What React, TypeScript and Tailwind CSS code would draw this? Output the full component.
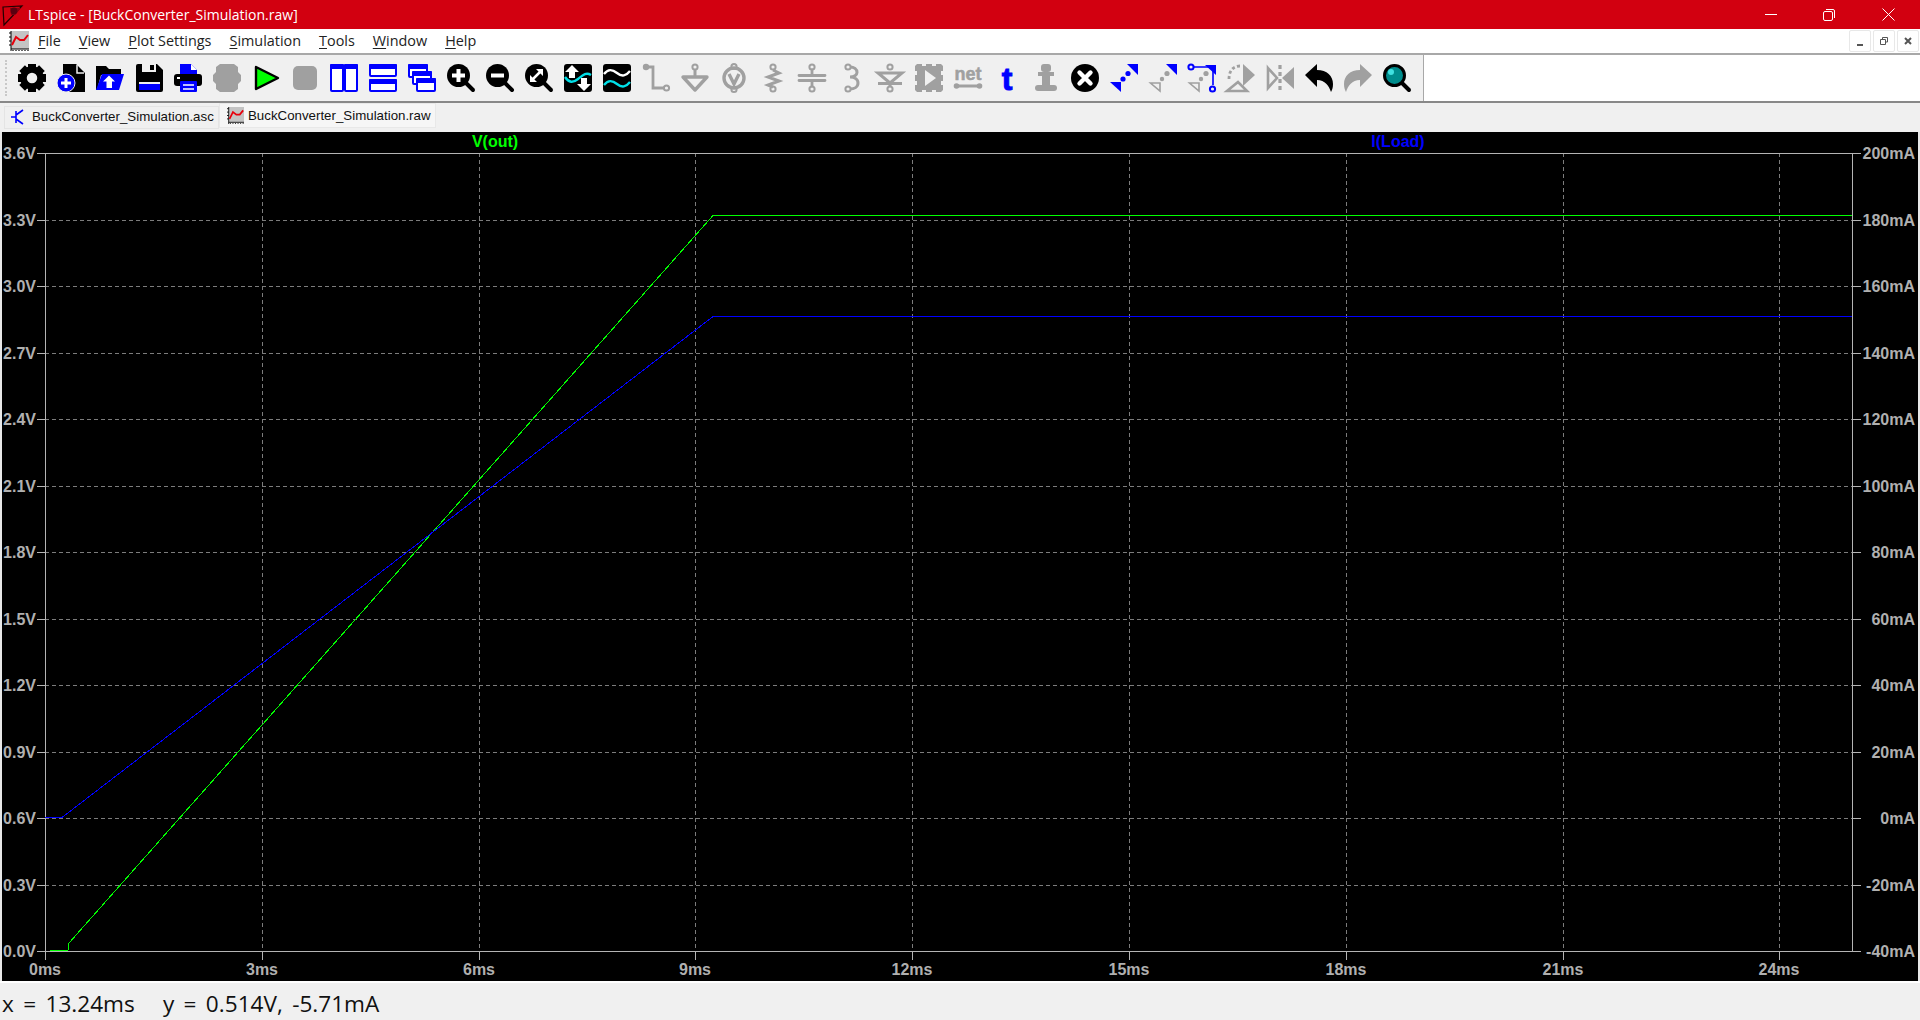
import React from "react";

const G = "#a0a0a0";
const B = "#0000ff";

function I({ children }: { children: React.ReactNode }) {
  return (
    <svg width="28" height="28" viewBox="0 0 28 28" className="shrink-0 overflow-visible">
      {children}
    </svg>
  );
}

function Lens({ children, fill = "#000" }: { children?: React.ReactNode; fill?: string }) {
  return (
    <I>
      <line x1="19" y1="19" x2="26" y2="26" stroke="#000" strokeWidth="4" strokeLinecap="round" />
      <circle cx="11.5" cy="11.5" r="11.5" fill={fill} />
      {children}
    </I>
  );
}

function Ring({ x, y, c = G }: { x: number; y: number; c?: string }) {
  return <circle cx={x} cy={y} r="2.6" fill="none" stroke={c} strokeWidth="2" />;
}

const Gear = () => (
  <I>
    {[0, 45, 90, 135, 180, 225, 270, 315].map((a) => (
      <rect key={a} x="10" y="0" width="8" height="7" fill="#000" transform={`rotate(${a} 14 14)`} />
    ))}
    <circle cx="14" cy="14" r="8.5" fill="none" stroke="#000" strokeWidth="6.5" />
  </I>
);

const NewDoc = () => (
  <I>
    <path d="M6 0H19L28 9V28H6Z" fill="#000" />
    <path d="M20 1V9H27" fill="none" stroke="#f0f0f0" strokeWidth="1.5" />
    <circle cx="9" cy="19" r="9" fill={B} stroke="#f0f0f0" strokeWidth="1" />
    <path d="M9 14V24M4 19H14" stroke="#fff" strokeWidth="3" />
  </I>
);

const Folder = () => (
  <I>
    <path d="M0 2H10L13 5H25V11H5L1 26H0Z" fill="#000" />
    <path d="M6 10H28L23 26H0Z" fill={B} />
    <path d="M13 11.5L19 17.5H16V24H10.5V17.5H7Z" fill="#fff" />
  </I>
);

const Save = () => (
  <I>
    <path d="M1 2Q1 0 3 0H22L28 6V26Q28 28 26 28H3Q1 28 1 26Z" fill="#000" />
    <rect x="7" y="0" width="14" height="8" fill="#f0f0f0" />
    <rect x="15" y="1" width="4" height="5" fill="#000" />
    <rect x="4" y="18" width="21" height="2" fill="#f0f0f0" />
    <rect x="4" y="20" width="21" height="6" fill={B} />
  </I>
);

const Print = () => (
  <I>
    <path d="M6 0H17L23 6V12H6Z" fill={B} />
    <path d="M17 0L23 6H17Z" fill="#fff" />
    <rect x="0" y="10" width="28" height="12" rx="3" fill="#000" />
    <rect x="3" y="13" width="3" height="2" fill="#fff" />
    <rect x="6" y="17" width="17" height="11" rx="1" fill={B} />
    <path d="M9 21H20M9 25H20" stroke="#fff" strokeWidth="1.5" />
  </I>
);

const Halt = () => (
  <I>
    <path d="M7 0H21L25 3V8L28 11V17L25 20V25L21 28H7L3 25V20L0 17V11L3 8V3Z" fill={G} />
  </I>
);

const Run = () => (
  <I>
    <path d="M4 3L26 14L4 25Z" fill="#00ff00" stroke="#000" strokeWidth="2.4" strokeLinejoin="round" />
  </I>
);

const Stop = () => (
  <I>
    <rect x="2" y="2" width="24" height="24" rx="5" fill={G} />
  </I>
);

const Pane = ({ x, y, w, h }: { x: number; y: number; w: number; h: number }) => (
  <g>
    <rect x={x + 1} y={y + 1} width={w - 2} height={h - 2} rx="1" fill="#fff" stroke={B} strokeWidth="2" />
    <rect x={x} y={y} width={w} height="5" rx="1" fill={B} />
  </g>
);

const TileV = () => (
  <I>
    <Pane x={0} y={0} w={14} h={28} />
    <Pane x={14} y={0} w={14} h={28} />
  </I>
);

const TileH = () => (
  <I>
    <Pane x={0} y={0} w={28} h={13} />
    <Pane x={0} y={15} w={28} h={13} />
  </I>
);

const Cascade = () => (
  <I>
    <Pane x={0} y={0} w={20} h={14} />
    <Pane x={4} y={7} w={20} h={14} />
    <Pane x={8} y={14} w={20} h={14} />
  </I>
);

const ZoomIn = () => (
  <Lens>
    <path d="M11.5 5V18M5 11.5H18" stroke="#fff" strokeWidth="4" />
  </Lens>
);
const ZoomOut = () => (
  <Lens>
    <path d="M5 11.5H18" stroke="#fff" strokeWidth="4" />
  </Lens>
);
const ZoomFit = () => (
  <Lens>
    <path d="M7 16L16 7" stroke="#fff" strokeWidth="2.5" />
    <path d="M11 5H18V12ZM5 11V18H12Z" fill="#fff" />
  </Lens>
);

const Wave1 = () => (
  <I>
    <rect width="28" height="28" rx="3" fill="#000" />
    <path d="M1 13C5 19 9 19 14 15S22 8 27 11" fill="none" stroke="#00e0e8" strokeWidth="2.4" />
    <path d="M8 1L15 8H11V14H5V8H1ZM20 27L13 20H17V14H23V20H27Z" fill="#fff" />
  </I>
);

const Wave2 = () => (
  <I>
    <rect width="28" height="28" rx="3" fill="#000" />
    <path d="M1 10C5 5 9 5 14 9S23 12 27 7" fill="none" stroke="#fff" strokeWidth="2.4" />
    <path d="M1 21C5 16 9 16 14 20S23 23 27 18" fill="none" stroke="#00e0e8" strokeWidth="2.4" />
  </I>
);

const Wire = () => (
  <I>
    <circle cx="4" cy="3" r="3.2" fill={G} />
    <path d="M4 3H11V24H22" fill="none" stroke={G} strokeWidth="2.8" />
    <Ring x={24.5} y={24} />
  </I>
);

const Gnd = () => (
  <I>
    <Ring x={14} y={3} />
    <path d="M14 6V12" stroke={G} strokeWidth="3" />
    <path d="M2 13H26L14 26Z" fill="none" stroke={G} strokeWidth="3.4" strokeLinejoin="round" />
  </I>
);

const Label = () => (
  <I>
    <circle cx="14" cy="14" r="10" fill="none" stroke={G} strokeWidth="3.4" />
    <path d="M9 10L14 20L19 10" fill="none" stroke={G} strokeWidth="3.4" />
    <Ring x={14} y={2.5} />
    <Ring x={14} y={25.5} />
  </I>
);

const Res = () => (
  <I>
    <Ring x={14} y={3} />
    <path d="M14 6L20 9L9 13L20 17L9 21L14 23" fill="none" stroke={G} strokeWidth="3" />
    <Ring x={14} y={25} />
  </I>
);

const Cap = () => (
  <I>
    <Ring x={14} y={3} />
    <path d="M14 6V11M14 17V22M1 11.5H27M1 16.5H27" stroke={G} strokeWidth="2.8" strokeLinecap="round" />
    <Ring x={14} y={25} />
  </I>
);

const Ind = () => (
  <I>
    <Ring x={11} y={3} />
    <path d="M13 3C17 3 20 5 20 8.5C20 11 17 13 13 13C17 13 21 15 21 19C21 23 17 25 13 25" fill="none" stroke={G} strokeWidth="3" />
    <Ring x={11} y={25} />
  </I>
);

const Diode = () => (
  <I>
    <Ring x={14} y={3} />
    <path d="M2 9H26L14 19ZM2 19.5H26M14 19V22" fill="none" stroke={G} strokeWidth="3" />
    <Ring x={14} y={25} />
  </I>
);

const Comp = () => (
  <I>
    <path
      d="M2 0H7V2H11V0H17V2H21V0H26L28 2V7H26V11H28V17H26V21H28V26L26 28H21V26H17V28H11V26H7V28H2L0 26V21H2V17H0V11H2V7H0V2Z"
      fill={G}
    />
    <path d="M10 6L21 14L10 22Z" fill="#f0f0f0" />
  </I>
);

const Net = () => (
  <I>
    <text x="14" y="16" textAnchor="middle" fontFamily="Liberation Sans" fontWeight="700" fontSize="18" fill={G} stroke={G} strokeWidth="0.5" textLength="27">
      net
    </text>
    <path d="M2 22H26" stroke={G} strokeWidth="3" />
    <circle cx="2.5" cy="22" r="2.8" fill={G} />
    <circle cx="25.5" cy="22" r="2.8" fill={G} />
  </I>
);

const T = () => (
  <I>
    <text x="14" y="26" textAnchor="middle" fontFamily="Liberation Sans" fontWeight="700" fontSize="32" fill={B} stroke={B} strokeWidth="1">
      t
    </text>
  </I>
);

const Spice = () => (
  <I>
    <rect x="9" y="0" width="10" height="8" rx="3" fill={G} />
    <rect x="6" y="8" width="16" height="4" fill={G} />
    <rect x="10" y="8" width="8" height="18" fill={G} />
    <rect x="3" y="21" width="22" height="6" rx="3" fill={G} />
  </I>
);

const Cross = () => (
  <I>
    <circle cx="14" cy="14" r="14" fill="#000" />
    <path d="M8.5 8.5L19.5 19.5M19.5 8.5L8.5 19.5" stroke="#fff" strokeWidth="4.4" strokeLinecap="round" />
  </I>
);

const Move = () => (
  <I>
    <path d="M17 0H28V11Z" fill={B} />
    <path d="M0 18H11V28Z" fill={B} />
    <circle cx="18" cy="9.5" r="2.6" fill={B} />
    <circle cx="13" cy="15" r="2.6" fill={B} />
  </I>
);

const Drag = () => (
  <I>
    <path d="M17 0H28V11Z" fill={B} />
    <path d="M1.5 19H11V27Z" fill="none" stroke={G} strokeWidth="1.6" />
    <circle cx="18" cy="9.5" r="2.6" fill={G} />
    <circle cx="13" cy="15" r="2.2" fill={G} />
  </I>
);

const DragWire = () => (
  <I>
    <path d="M17 1H28V11Z" fill={B} />
    <path d="M6 3H25V21" fill="none" stroke={B} strokeWidth="1.6" />
    <Ring x={3} y={3} c={B} />
    <Ring x={24.5} y={25} c={B} />
    <path d="M1.5 19H11V27Z" fill="none" stroke={G} strokeWidth="1.6" />
    <circle cx="18" cy="9.5" r="2.6" fill={G} />
    <circle cx="13" cy="15" r="2.2" fill={G} />
  </I>
);

const Rotate = () => (
  <I>
    <path d="M16 0L28 11L16 22Z" fill={G} />
    <path d="M0 27H20L11 18Z" fill="none" stroke={G} strokeWidth="2.6" />
    <path d="M13 2C6 2 2 7 2 15" fill="none" stroke={G} strokeWidth="2.8" strokeDasharray="3 2.4" />
  </I>
);

const Mirror = () => (
  <I>
    <path d="M2 4L11 14L2 24Z" fill="none" stroke={G} strokeWidth="2.6" />
    <path d="M28 3V25L16 14Z" fill={G} />
    <path d="M14 1V28" stroke={G} strokeWidth="3.2" strokeDasharray="4 3" />
  </I>
);

const undoD = "M0 11L12 0V6C22 6 28 12 28 20C28 24 27 26 26 28C24 22 20 16 12 16V23Z";
const Undo = () => (
  <I>
    <path d={undoD} fill="#000" />
  </I>
);
const Redo = () => (
  <I>
    <path d={undoD} fill={G} transform="matrix(-1 0 0 1 28 0)" />
  </I>
);

const Find = () => (
  <I>
    <line x1="19" y1="19" x2="26" y2="26" stroke="#000" strokeWidth="4" strokeLinecap="round" />
    <circle cx="11.5" cy="11.5" r="10" fill="#008c8c" stroke="#000" strokeWidth="3" />
    <circle cx="8" cy="8" r="3" fill="#40e0e0" />
  </I>
);

const tools = [
  Gear, NewDoc, Folder, Save, Print, Halt, Run, Stop, TileV, TileH, Cascade, ZoomIn, ZoomOut, ZoomFit,
  Wave1, Wave2, Wire, Gnd, Label, Res, Cap, Ind, Diode, Comp, Net, T, Spice, Cross, Move, Drag, DragWire,
  Rotate, Mirror, Undo, Redo, Find,
];

function ChartIcon({ size }: { size: number }) {
  return (
    <svg width={size} height={size} viewBox="0 0 20 20" className="shrink-0">
      <rect x="2" y="0" width="18" height="18" fill="#c4c4c4" />
      <path d="M2 0V20M0 2H2M0 6H2M0 10H2M0 14H2M2 18H20" stroke="#000" strokeWidth="1" />
      <path d="M4 19V20M7 19V20M10 19V20M13 19V20M16 19V20M19 19V20" stroke="#000" strokeWidth="1.2" />
      <path d="M3 14L7 6L11 9L15 9L19 4" fill="none" stroke="#e8000c" strokeWidth="2" />
    </svg>
  );
}

function Mn({ u, rest }: { u: string; rest: string }) {
  return (
    <span>
      <span className="underline underline-offset-2 decoration-1">{u}</span>
      {rest}
    </span>
  );
}

const ys = Array.from({ length: 13 }, (_, i) => 153 + i * 66.5);
const xs = Array.from({ length: 9 }, (_, i) => Math.round(45 + i * 216.8));
const vLabels = ["3.6V", "3.3V", "3.0V", "2.7V", "2.4V", "2.1V", "1.8V", "1.5V", "1.2V", "0.9V", "0.6V", "0.3V", "0.0V"];
const aLabels = ["200mA", "180mA", "160mA", "140mA", "120mA", "100mA", "80mA", "60mA", "40mA", "20mA", "0mA", "-20mA", "-40mA"];
const tLabels = ["0ms", "3ms", "6ms", "9ms", "12ms", "15ms", "18ms", "21ms", "24ms"];

function Plot() {
  const txt = { fontFamily: "Liberation Sans, Arial, sans-serif", fontWeight: 700, fontSize: 16, fill: "#b0b0b0" };
  return (
    <svg width="1916" height="849" viewBox="2 132 1916 849" className="block bg-black">
      <g shapeRendering="crispEdges" fill="none" strokeWidth="1">
        {ys.slice(1, 12).map((y) => (
          <line key={y} x1="45" x2="1852" y1={Math.round(y)} y2={Math.round(y)} stroke="#7c7c7c" strokeDasharray="4 3" />
        ))}
        {xs.slice(1).map((x) => (
          <line key={x} x1={x} x2={x} y1="153" y2="951" stroke="#7c7c7c" strokeDasharray="4 3" />
        ))}
        <rect x="45" y="153" width="1807" height="798" stroke="#b4b4b4" />
        {ys.map((y) => (
          <g key={y}>
            <line x1="37" x2="45" y1={Math.round(y)} y2={Math.round(y)} stroke="#b4b4b4" />
            <line x1="1852" x2="1861" y1={Math.round(y)} y2={Math.round(y)} stroke="#b4b4b4" />
          </g>
        ))}
        {xs.map((x) => (
          <line key={x} x1={x} x2={x} y1="951" y2="960" stroke="#b4b4b4" />
        ))}
        <polyline points="50,950.5 68,950.5 69,943 713,215.5 1852,215.5" stroke="#00ff00" strokeWidth="1" />
        <polyline points="45,817.5 62,817.5 713,316.5 1852,316.5" stroke="#0000ff" strokeWidth="1" />
      </g>
      {vLabels.map((t, i) => (
        <text key={t} x="36" y={ys[i] + 6} textAnchor="end" {...txt}>
          {t}
        </text>
      ))}
      {aLabels.map((t, i) => (
        <text key={t} x="1915" y={ys[i] + 6} textAnchor="end" {...txt}>
          {t}
        </text>
      ))}
      {tLabels.map((t, i) => (
        <text key={t} x={xs[i]} y="975" textAnchor="middle" {...txt}>
          {t}
        </text>
      ))}
      <text x="495" y="147" textAnchor="middle" {...txt} fill="#00ff00">
        V(out)
      </text>
      <text x="1398" y="147" textAnchor="middle" {...txt} fill="#0000ff">
        I(Load)
      </text>
    </svg>
  );
}

export default function App() {
  return (
    <div className="w-[1920px] h-[1020px] overflow-hidden flex flex-col bg-[#f0f0f0] font-['Open_Sans',sans-serif]">
      {/* title bar */}
      <div className="h-[29px] shrink-0 bg-[#d20010] flex items-center text-white">
        <svg width="24" height="26" viewBox="0 0 24 26" className="ml-[1px] shrink-0">
          <path d="M2 5L21 4L3 23Z" fill="none" stroke="#200" strokeWidth="1.2" />
          <path d="M9 6H20L14 13H10Z" fill="#8c0010" />
          <circle cx="13" cy="9" r="3.4" fill="#5a0010" />
        </svg>
        <span className="ml-[3px] pt-[1px] text-[14px] leading-none whitespace-pre">LTspice - [BuckConverter_Simulation.raw]</span>
        <div className="ml-auto flex items-center pr-[2px]">
          <div className="w-[58px] flex justify-center">
            <div className="w-[12px] h-[1px] bg-white" />
          </div>
          <div className="w-[58px] flex justify-center">
            <svg width="12" height="12" viewBox="0 0 12 12">
              <rect x="0.5" y="2.5" width="9" height="9" rx="1.5" fill="none" stroke="#fff" />
              <path d="M3 .5H10Q11.5 .5 11.5 2V9" fill="none" stroke="#fff" />
            </svg>
          </div>
          <div className="w-[60px] flex justify-center">
            <svg width="13" height="13" viewBox="0 0 13 13">
              <path d="M.5 .5L12.5 12.5M12.5 .5L.5 12.5" stroke="#fff" strokeWidth="1" />
            </svg>
          </div>
        </div>
      </div>

      {/* menu bar */}
      <div className="h-[26px] shrink-0 bg-white border-b-2 border-[#a8a8a8] flex items-center text-[14.4px] text-[#222] box-border">
        <div className="ml-[9px] mr-[9px]">
          <ChartIcon size={20} />
        </div>
        <div className="flex gap-[18px] leading-none pt-[1px]">
          <Mn u="F" rest="ile" />
          <Mn u="V" rest="iew" />
          <Mn u="P" rest="lot Settings" />
          <Mn u="S" rest="imulation" />
          <Mn u="T" rest="ools" />
          <Mn u="W" rest="indow" />
          <Mn u="H" rest="elp" />
        </div>
        <div className="ml-auto flex gap-[2px] pr-[1px]">
          {[
            <path key="a" d="M2 9H8" stroke="#555" strokeWidth="2" />,
            <path key="b" d="M1.5 3.5H6.5V8.5H1.5ZM3.5 3V1.5H8.5V6H7" fill="none" stroke="#555" strokeWidth="1" />,
            <path key="c" d="M2 2L8 8M8 2L2 8" stroke="#555" strokeWidth="2" />,
          ].map((p, i) => (
            <div key={i} className="w-[22px] h-[22px] border border-[#e8e8e8] rounded-[2px] flex items-center justify-center">
              <svg width="10" height="10" viewBox="0 0 10 10">
                {p}
              </svg>
            </div>
          ))}
        </div>
      </div>

      {/* toolbar */}
      <div className="h-[48px] shrink-0 bg-white border-b-2 border-[#888] flex box-border">
        <div className="w-[1424px] bg-[#f0f0f0] border-r border-[#a8a8a8] flex items-center pl-[5px]">
          <div className="h-[36px] w-0 border-l-2 border-dotted border-[#c8c8c8] mr-[11px]" />
          <div className="flex items-center gap-[11px]">
            {tools.map((C, i) => (
              <C key={i} />
            ))}
          </div>
        </div>
      </div>

      {/* tabs */}
      <div className="h-[29px] shrink-0 bg-[#f0f0f0] flex items-start pl-[4px] font-['Liberation_Sans',sans-serif] text-[13.3px] text-[#111]">
        <div className="mt-[3px] h-[23px] w-[215px] border border-[#e4e4e4] flex items-center pb-[2px]">
          <svg width="14" height="16" viewBox="0 0 14 16" className="ml-[6px] mr-[7px] shrink-0">
            <path d="M0 8H5M5 2V14M5 6L12 1M5 10L12 15" stroke="#0000ff" strokeWidth="1.6" fill="none" />
          </svg>
          <span className="whitespace-pre">BuckConverter_Simulation.asc</span>
        </div>
        <div className="h-[25px] w-[217px] bg-[#f6f6f6] border border-[#e8e8e8] flex items-center">
          <div className="ml-[7px] mr-[4px]">
            <ChartIcon size={17} />
          </div>
          <span className="whitespace-pre">BuckConverter_Simulation.raw</span>
        </div>
      </div>

      {/* plot */}
      <div className="h-[849px] shrink-0 pl-[2px] pr-[2px] bg-[#e8e8e8]">
        <Plot />
      </div>

      {/* status */}
      <div className="flex-1 border-t-2 border-white flex items-center pl-[2px] pt-[4px] text-[22.6px] text-[#111] whitespace-pre [word-spacing:3.5px]">
        x = 13.24ms   y = 0.514V, -5.71mA
      </div>
    </div>
  );
}
